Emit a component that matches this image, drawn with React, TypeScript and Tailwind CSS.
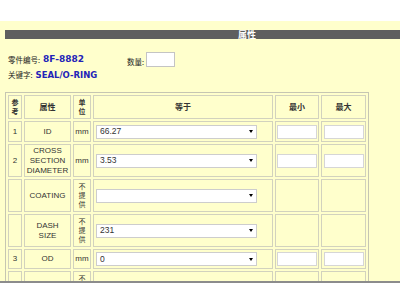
import React from 'react';

const cjk = '"Noto Sans CJK SC", sans-serif';

type Row = {
    ref: string;
    name: string[];
    unit: string;
    value: string;
    range: boolean;
    h: string;
};

const rows: Row[] = [
    { ref: '1', name: ['ID'], unit: 'mm', value: '66.27', range: true, h: 'h-[21px]' },
    { ref: '2', name: ['CROSS', 'SECTION', 'DIAMETER'], unit: 'mm', value: '3.53', range: true, h: 'h-[33px]' },
    { ref: '', name: ['COATING'], unit: '不提供', value: '', range: false, h: 'h-[33px]' },
    { ref: '', name: ['DASH', 'SIZE'], unit: '不提供', value: '231', range: false, h: 'h-[33px]' },
    { ref: '3', name: ['OD'], unit: 'mm', value: '0', range: true, h: 'h-[20px]' },
    { ref: '', name: [], unit: '不提供', value: '', range: false, h: 'h-[33px]' },
];

const cell = 'border border-[#d2d2be] flex items-center justify-center text-center overflow-hidden';

const Select: React.FC<{ value: string }> = ({ value }) => (
    <div className="w-[161px] h-[14px] bg-white border border-[#cdcdcd] flex items-center justify-between pl-[3px] pr-[3px] text-[8.5px] text-[#333] font-['Liberation_Sans',sans-serif]">
        <span>{value}</span>
        <span className="w-0 h-0 border-l-[2.5px] border-r-[2.5px] border-t-[3px] border-l-transparent border-r-transparent border-t-black" />
    </div>
);

const Box: React.FC = () => <div className="w-[40px] h-[14px] bg-white border border-[#d6d6d6]" />;

const Stack: React.FC<{ text: string; bold?: boolean }> = ({ text, bold }) => (
    <div className={`flex flex-col items-center text-[7px] ${bold ? 'font-bold' : ''}`} style={{ fontFamily: cjk }}>
        {text.split('').map((c, i) => (
            <span key={i} className="block h-[9px] leading-[9px]">{c}</span>
        ))}
    </div>
);

export default function App() {
    return (
        <div className="w-[400px] h-[300px] bg-white overflow-hidden">
            <div className="mt-[21px] h-[262px] bg-[#ffffcc] border-b-2 border-[#8c8c8c] overflow-hidden pt-[9px] text-[#222]">
                <div className="ml-[5px] w-[484px] h-[9px] bg-[#5f5f5f] flex items-center justify-center">
                    <span className="text-white text-[9px] font-bold leading-none" style={{ fontFamily: cjk }}>属性</span>
                </div>

                <div className="mt-[13px] ml-[8px] h-[15px] flex items-center">
                    <div className="w-[119px] flex items-center">
                        <span className="text-[7.5px]" style={{ fontFamily: cjk }}>零件编号:</span>
                        <span className="ml-[3px] text-[9px] font-bold text-[#2323b8] font-['DejaVu_Sans',sans-serif]">8F-8882</span>
                    </div>
                    <span className="text-[7.5px] mt-[4px]" style={{ fontFamily: cjk }}>数量:</span>
                    <div className="ml-[2px] w-[29px] h-[15px] bg-white border border-[#c4c4c4]" />
                </div>
                <div className="ml-[8px] h-[16px] flex items-center">
                    <span className="text-[7.5px]" style={{ fontFamily: cjk }}>关键字:</span>
                    <span className="ml-[3px] text-[8.5px] font-bold text-[#2323b8] font-['DejaVu_Sans',sans-serif]">SEAL/O-RING</span>
                </div>

                <div className="mt-[9px] ml-[5px] w-[364px] border border-[#c6c6b2] p-[2px] grid grid-cols-[14px_47px_18px_180px_44px_45px] gap-[2px] text-[8px] font-['Liberation_Sans',sans-serif] text-[#333]">
                    <div className={`${cell} h-[24px]`}><Stack text="参考" bold /></div>
                    <div className={cell}><span className="text-[8px] font-bold" style={{ fontFamily: cjk }}>属性</span></div>
                    <div className={cell}><Stack text="单位" bold /></div>
                    <div className={cell}><span className="text-[8px] font-bold" style={{ fontFamily: cjk }}>等于</span></div>
                    <div className={cell}><span className="text-[8px] font-bold" style={{ fontFamily: cjk }}>最小</span></div>
                    <div className={cell}><span className="text-[8px] font-bold" style={{ fontFamily: cjk }}>最大</span></div>

                    {rows.map((r, i) => (
                        <React.Fragment key={i}>
                            <div className={`${cell} ${r.h}`}>{r.ref}</div>
                            <div className={`${cell} flex-col leading-[10px]`}>
                                {r.name.map((n) => (
                                    <span key={n}>{n}</span>
                                ))}
                            </div>
                            <div className={cell}>{r.unit === 'mm' ? r.unit : <Stack text={r.unit} />}</div>
                            <div className={`${cell} justify-start pl-[2px]`}><Select value={r.value} /></div>
                            <div className={cell}>{r.range && <Box />}</div>
                            <div className={cell}>{r.range && <Box />}</div>
                        </React.Fragment>
                    ))}
                </div>
            </div>
        </div>
    );
}
